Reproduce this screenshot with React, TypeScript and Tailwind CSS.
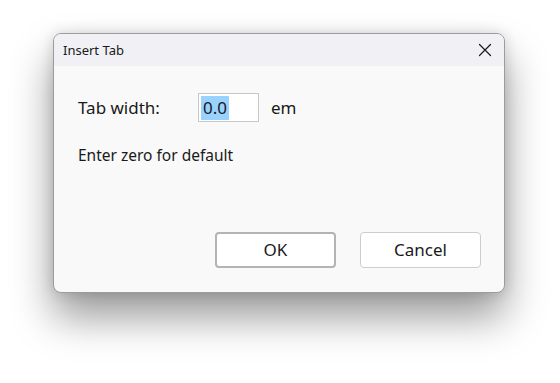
import React from "react";

const font = { fontFamily: '"Noto Sans", "Open Sans", sans-serif' };

const CloseIcon = () => (
  <svg width="14" height="14" viewBox="0 0 14 14" fill="none">
    <path d="M1.5 1.5L12.5 12.5M12.5 1.5L1.5 12.5" stroke="#1a1a1a" strokeWidth="1.2" strokeLinecap="round" />
  </svg>
);

const App = () => {
  return (
    <div className="w-[560px] h-[383px] bg-white pt-[33px] pl-[53px]" style={font}>
      <div className="w-[452px] h-[260px] flex flex-col rounded-[8px] border border-[#9c9c9c] bg-[#f9f9f9] overflow-hidden shadow-[0_24px_42px_rgba(0,0,0,0.4),0_0_14px_rgba(0,0,0,0.14)]">
        {/* Title bar */}
        <div className="h-[32px] shrink-0 bg-[#f0f0f5] flex items-center justify-between pl-[9px] pr-[12px]">
          <span className="text-[13px] text-[#1a1a1a] leading-none">Insert Tab</span>
          <CloseIcon />
        </div>

        {/* Body */}
        <div className="flex-1 flex flex-col pl-[24px] pr-[23px] pt-[27px] pb-[24px] text-[#1a1a1a]">
          <div className="flex items-center">
            <span className="w-[120px] text-[17px] leading-none">Tab width:</span>
            <div className="w-[61px] h-[29px] border border-[#c8c8c8] bg-white flex items-center pl-[2px]">
              {/* selected text */}
              <span className="h-[24px] px-[2px] bg-[#99d1ff] text-[17px] leading-[24px]">0.0</span>
            </div>
            <span className="ml-[12px] text-[17px] leading-none">em</span>
          </div>

          <p className="mt-[26px] text-[15.5px] leading-none">Enter zero for default</p>

          <div className="mt-auto flex justify-end gap-[24px]">
            <button className="w-[121px] h-[36px] rounded-[4px] border-2 border-[#b4b4b4] bg-white text-[17px]" style={font}>
              OK
            </button>
            <button className="w-[121px] h-[36px] rounded-[4px] border border-[#cdcdcd] bg-white text-[17px]" style={font}>
              Cancel
            </button>
          </div>
        </div>
      </div>
    </div>
  );
};

export default App;
